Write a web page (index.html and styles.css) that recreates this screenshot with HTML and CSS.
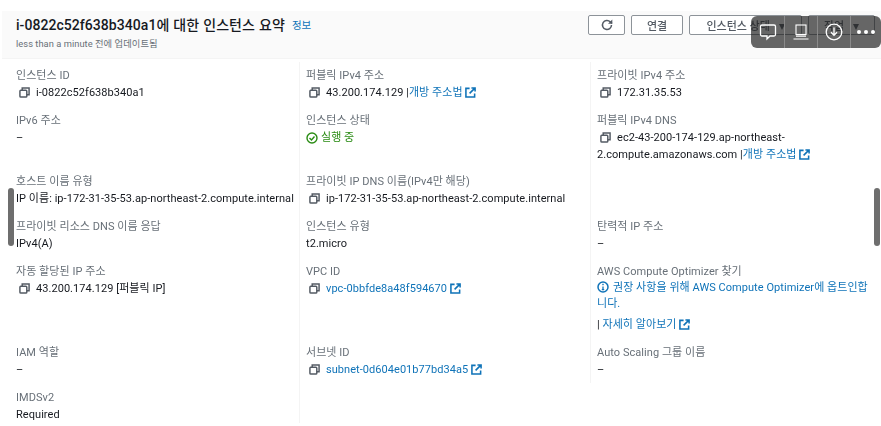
FILE: index.html
```html
<!DOCTYPE html>
<html lang="ko">
  <head>
    <meta charset="UTF-8" />
    <meta name="viewport" content="width=device-width, initial-scale=1.0" />
    <title>인스턴스 요약</title>
    <link rel="stylesheet" href="styles.css">
  </head>
  <body>
    <svg class="defs" width="0" height="0">
      <symbol id="copy" viewBox="0 0 12 12">
        <path d="M3.5 3.5V1h7.5v7.5H8.5" fill="none" stroke="currentColor" stroke-width="1.6" />
        <rect x="1" y="3.5" width="7.5" height="7.5" rx="1" fill="none" stroke="currentColor" stroke-width="1.6" />
      </symbol>
      <symbol id="ext" viewBox="0 0 12 12">
        <path d="M5 1.5H1v9.5h9.500V7" fill="none" stroke="currentColor" stroke-width="1.7" />
        <path d="M7 1h4v4M11 1L5 7" fill="none" stroke="currentColor" stroke-width="1.7" />
      </symbol>
    </svg>

    <div class="page">
      <div class="head">
        <div>
          <h1>i-0822c52f638b340a1에 대한 인스턴스 요약 <a href="#" class="info">정보</a></h1>
          <p class="updated">less than a minute 전에 업데이트됨</p>
        </div>
        <div class="actions">
          <button class="btn btn-icon">
            <svg width="14" height="14" viewBox="0 0 14 14"><path d="M11.500 7a4.500 4.500 0 1 1-1.300-3.200L12 5.500" fill="none" stroke="currentColor" stroke-width="1.500" /><path d="M12.300 1.500v4.300H8z" fill="currentColor" /></svg>
          </button>
          <button class="btn btn-connect">연결</button>
          <button class="btn btn-state">인스턴스 상태 <i class="caret"></i></button>
          <button class="btn btn-work">작업 <i class="caret"></i></button>
        </div>
      </div>

      <div class="grid">
        <div class="cell first">
          <div class="label">인스턴스 ID</div>
          <div class="value copy"><svg class="ico-copy"><use href="#copy" /></svg>i-0822c52f638b340a1</div>
        </div>
        <div class="cell first">
          <div class="label">퍼블릭 IPv4 주소</div>
          <div class="value copy"><svg class="ico-copy"><use href="#copy" /></svg>43.200.174.129 |<a href="#">개방 주소법</a> <svg class="ico-ext"><use href="#ext" /></svg></div>
        </div>
        <div class="cell first">
          <div class="label">프라이빗 IPv4 주소</div>
          <div class="value copy"><svg class="ico-copy"><use href="#copy" /></svg>172.31.35.53</div>
        </div>

        <div class="cell">
          <div class="label">IPv6 주소</div>
          <div class="value">–</div>
        </div>
        <div class="cell">
          <div class="label">인스턴스 상태</div>
          <div class="value running">
            <svg class="ico-ok" viewBox="0 0 12 12"><circle cx="6" cy="6" r="5" fill="none" stroke="currentColor" stroke-width="1.400" /><path d="M3.500 6l2 2 3-3.500" fill="none" stroke="currentColor" stroke-width="1.400" /></svg>실행 중
          </div>
        </div>
        <div class="cell">
          <div class="label">퍼블릭 IPv4 DNS</div>
          <div class="value dns"><svg class="ico-copy"><use href="#copy" /></svg>ec2-43-200-174-129.ap-northeast-2.compute.amazonaws.com |<a href="#">개방 주소법</a> <svg class="ico-ext"><use href="#ext" /></svg></div>
        </div>

        <div class="cell">
          <div class="label">호스트 이름 유형</div>
          <div class="value nowrap">IP 이름: ip-172-31-35-53.ap-northeast-2.compute.internal</div>
        </div>
        <div class="cell">
          <div class="label">프라이빗 IP DNS 이름(IPv4만 해당)</div>
          <div class="value copy"><svg class="ico-copy"><use href="#copy" /></svg>ip-172-31-35-53.ap-northeast-2.compute.internal</div>
        </div>
        <div class="cell"></div>

        <div class="cell">
          <div class="label">프라이빗 리소스 DNS 이름 응답</div>
          <div class="value">IPv4(A)</div>
        </div>
        <div class="cell">
          <div class="label">인스턴스 유형</div>
          <div class="value">t2.micro</div>
        </div>
        <div class="cell">
          <div class="label">탄력적 IP 주소</div>
          <div class="value">–</div>
        </div>

        <div class="cell">
          <div class="label">자동 할당된 IP 주소</div>
          <div class="value copy"><svg class="ico-copy"><use href="#copy" /></svg>43.200.174.129 [퍼블릭 IP]</div>
        </div>
        <div class="cell">
          <div class="label">VPC ID</div>
          <div class="value copy"><svg class="ico-copy"><use href="#copy" /></svg><a href="#">vpc-0bbfde8a48f594670</a> <svg class="ico-ext"><use href="#ext" /></svg></div>
        </div>
        <div class="cell">
          <div class="label">AWS Compute Optimizer 찾기</div>
          <div class="value optimizer">
            <svg class="ico-info" viewBox="0 0 12 12"><circle cx="6" cy="6" r="5" fill="none" stroke="currentColor" stroke-width="1.500" /><path d="M6 5.500v3M4.800 8.700h2.400" fill="none" stroke="currentColor" stroke-width="1.300" /><rect x="5.300" y="2.800" width="1.400" height="1.400" fill="currentColor" /></svg><a href="#">권장 사항을 위해 AWS Compute Optimizer에 옵트인합니다.</a>
          </div>
          <div class="value more">| <a href="#">자세히 알아보기</a> <svg class="ico-ext"><use href="#ext" /></svg></div>
        </div>

        <div class="cell">
          <div class="label">IAM 역할</div>
          <div class="value">–</div>
        </div>
        <div class="cell">
          <div class="label">서브넷 ID</div>
          <div class="value copy"><svg class="ico-copy"><use href="#copy" /></svg><a href="#">subnet-0d604e01b77bd34a5</a> <svg class="ico-ext"><use href="#ext" /></svg></div>
        </div>
        <div class="cell short">
          <div class="label">Auto Scaling 그룹 이름</div>
          <div class="value">–</div>
        </div>

        <div class="cell">
          <div class="label">IMDSv2</div>
          <div class="value">Required</div>
        </div>
        <div class="cell"></div>
      </div>
    </div>

    <div class="scroll scroll-left"></div>
    <div class="scroll scroll-right"></div>

    <div class="toolbar">
      <div class="tool">
        <svg width="18" height="18" viewBox="0 0 18 18"><path d="M3 2h12a1.500 1.500 0 0 1 1.500 1.500v8A1.500 1.500 0 0 1 15 13h-4l-3 3v-3H3a1.500 1.500 0 0 1-1.500-1.500v-8A1.500 1.500 0 0 1 3 2z" fill="none" stroke="#fff" stroke-width="1.300" /></svg>
      </div>
      <div class="tool">
        <svg width="18" height="18" viewBox="0 0 18 18"><rect x="4" y="2" width="10" height="9.500" fill="none" stroke="#fff" stroke-width="1.100" /><path d="M4 13.200h10M1.500 16h15" stroke="#fff" stroke-width="1.200" /></svg>
      </div>
      <div class="tool">
        <svg width="18" height="18" viewBox="0 0 18 18"><circle cx="9" cy="9" r="7.800" fill="none" stroke="#fff" stroke-width="1.300" /><path d="M9 4.500v7.500M6 9.300L9 12.300l3-3" fill="none" stroke="#fff" stroke-width="1.300" /></svg>
      </div>
      <div class="tool tool-dots"><i></i><i></i><i></i></div>
    </div>
  </body>
</html>
```

FILE: styles.css
```css
* {
  box-sizing: border-box;
}
html,
body {
  height: 100%;
}
body {
  margin: 0;
  overflow: hidden;
  background-color: white;
  color: #16191f;
  font-family: Roboto, "Noto Sans CJK KR", sans-serif;
  font-size: 11px;
  line-height: 17px;
  letter-spacing: 0.05px;
}
a {
  color: #0f73b8;
  text-decoration: none;
}
.defs {
  position: absolute;
}
.page {
  height: 426px;
  padding: 11px 0 0 2px;
  filter: blur(0.35px);
}

/* header */
.head {
  display: flex;
  justify-content: space-between;
  height: 48px;
  padding: 4px 6px 0 14px;
  background-color: #fafafa;
  border-bottom: 1px solid #f4f4f4;
}
h1 {
  margin: 0;
  font-size: 14px;
  font-weight: 500;
  line-height: 20px;
  word-spacing: 0.5px;
}
.info {
  margin-left: 3px;
  font-size: 10.500px;
  font-weight: 400;
  vertical-align: 1px;
}
.updated {
  margin: 0;
  color: #687078;
  font-size: 9.300px;
  line-height: 16px;
}
.actions {
  display: flex;
  gap: 6px;
}
.btn {
  height: 20px;
  padding: 0;
  background-color: white;
  border: 1px solid #8d9399;
  border-radius: 2px;
  color: #545b64;
  font: 500 11px Roboto, "Noto Sans CJK KR", sans-serif;
}
.btn-icon {
  display: flex;
  align-items: center;
  justify-content: center;
  width: 37px;
}
.btn-connect {
  width: 52px;
}
.btn-state {
  width: 113px;
}
.btn-work {
  width: 67px;
}
.caret {
  display: inline-block;
  margin-left: 6px;
  border-top: 6px solid #545b64;
  border-left: 3.500px solid transparent;
  border-right: 3.500px solid transparent;
}

/* details */
.grid {
  display: grid;
  grid-template-columns: 297px 291px 291px;
  grid-template-rows: 50px 61px 45px 45px 81px 45px 34px;
  margin-top: 3px;
}
.cell {
  padding: 0 10px 0 6px;
  border-left: 1px solid #f4f4f4;
}
.cell:nth-child(3n + 1) {
  padding: 0 0 0 14px;
  border-left: 0;
}
.cell.first {
  padding-top: 5px;
}
.short {
  margin-bottom: 6px;
}
.label {
  height: 17px;
  color: #687078;
}
.copy {
  padding-left: 3px;
}
.dns {
  text-indent: 3px;
}
.nowrap {
  white-space: nowrap;
}
.ico-copy {
  width: 11px;
  height: 11px;
  margin-right: 6px;
  color: #545b64;
  vertical-align: -2px;
}
.ico-ext {
  width: 11px;
  height: 11px;
  color: #0f73b8;
  vertical-align: -2px;
}
.running {
  color: #2a8c14;
}
.ico-ok {
  width: 12px;
  height: 12px;
  margin-right: 3px;
  vertical-align: -3px;
}
.optimizer {
  line-height: 16px;
}
.ico-info {
  width: 12px;
  height: 12px;
  margin-right: 4px;
  color: #0f73b8;
  vertical-align: -2px;
}
.more {
  margin-top: 4px;
}

/* overlays */
.scroll {
  position: absolute;
  top: 188px;
  width: 6px;
  height: 58px;
  background-color: #6e6e6e;
  border-radius: 3px;
}
.scroll-left {
  left: 8px;
}
.scroll-right {
  left: 874px;
}
.toolbar {
  position: absolute;
  top: 16px;
  left: 751px;
  display: flex;
  width: 130px;
  height: 32px;
  background-color: rgba(30, 30, 30, 0.68);
  border-radius: 6px;
}
.tool {
  display: flex;
  align-items: center;
  justify-content: center;
  width: 33px;
  border-left: 1px solid #8a8a8a;
}
.tool:first-child {
  border-left: 0;
}
.tool-dots {
  gap: 3px;
  width: 31px;
}
.tool-dots i {
  width: 4px;
  height: 4px;
  background-color: white;
  border-radius: 50%;
}
```
